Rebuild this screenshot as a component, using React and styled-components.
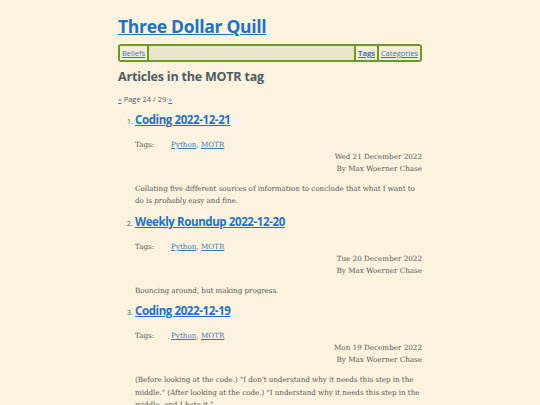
import React from "react";
import styled, { createGlobalStyle } from "styled-components";

const GlobalStyle = createGlobalStyle`
    html, body {
        margin: 0;
        padding: 0;
        background: #fbf3dd;
    }
    body {
        font-family: "DejaVu Serif", serif;
        color: #555a5c;
    }
`;

const Page = styled.div`
    width: 304px;
    margin: 0 auto;
    padding-top: 14px;
`;

const SiteTitle = styled.h1`
    margin: 0;
    font-family: "Open Sans", sans-serif;
    font-size: 17.5px;
    font-weight: 700;
    line-height: 24px;
    letter-spacing: -0.3px;
    a {
        color: #1c72c9;
    }
`;

const Nav = styled.nav`
    display: flex;
    align-items: stretch;
    margin-top: 6px;
    height: 14px;
    border: 2px solid #6b9b22;
    border-radius: 3px;
    background: #ebe4cd;
    font-family: "Open Sans", sans-serif;
    font-size: 7.5px;
    line-height: 14px;
`;

const NavItem = styled.a`
    padding: 0 2px;
    color: #3b77b8;
    font-weight: ${(p) => (p.$bold ? 700 : 400)};
    border-left: ${(p) => (p.$sepLeft ? "2px solid #6b9b22" : "none")};
    border-right: ${(p) => (p.$sepRight ? "2px solid #6b9b22" : "none")};
    background: #f4ecd4;
`;

const NavFill = styled.div`
    flex: 1;
`;

const TagHeading = styled.h2`
    margin: 6px 0 0;
    font-family: "Open Sans", sans-serif;
    font-size: 12.5px;
    font-weight: 700;
    line-height: 18px;
    color: #4e5c66;
    letter-spacing: -0.2px;
`;

const Pager = styled.div`
    margin-top: 7px;
    font-family: "Open Sans", sans-serif;
    font-size: 7.5px;
    line-height: 12px;
    color: #56606a;
    a {
        color: #3b77b8;
    }
`;

const List = styled.ol`
    margin: 3px 0 0;
    padding-left: 17px;
    li::marker {
        font-family: "Open Sans", sans-serif;
        font-size: 7.5px;
        color: #56606a;
    }
`;

const Entry = styled.li`
    margin-bottom: 2px;
`;

const EntryTitle = styled.h3`
    margin: 0;
    font-family: "Open Sans", sans-serif;
    font-size: 11.5px;
    font-weight: 700;
    line-height: 24px;
    letter-spacing: -0.4px;
    a {
        color: #1c72c9;
    }
`;

const Meta = styled.div`
    font-size: 7.2px;
    line-height: 12px;
`;

const TagRow = styled.div`
    display: flex;
    margin-top: 7px;
    a {
        color: #3b77b8;
    }
`;

const TagLabel = styled.span`
    width: 36px;
`;

const Byline = styled.div`
    text-align: right;
`;

const Summary = styled.p`
    margin: 8px 0 0;
    font-size: 7.2px;
    line-height: 12.4px;
    letter-spacing: -0.05px;
`;

const entries = [
    {
        title: "Coding 2022-12-21",
        date: "Wed 21 December 2022",
        summary: (
            <>
                Collating five different sources of information to conclude that what I want to do is{" "}
                <em>probably</em> easy and fine.
            </>
        ),
    },
    {
        title: "Weekly Roundup 2022-12-20",
        date: "Tue 20 December 2022",
        summary: <>Bouncing around, but making progress.</>,
    },
    {
        title: "Coding 2022-12-19",
        date: "Mon 19 December 2022",
        summary: (
            <>
                (Before looking at the code.) "I don't understand why it needs this step in the middle." (After
                looking at the code.) "I understand why it needs this step in the middle, and I <em>hate</em> it."
            </>
        ),
    },
];

export default function App() {
    return (
        <Page>
            <GlobalStyle />
            <SiteTitle>
                <a href="#">Three Dollar Quill</a>
            </SiteTitle>
            <Nav>
                <NavItem href="#" $sepRight>Beliefs</NavItem>
                <NavFill />
                <NavItem href="#" $bold $sepLeft $sepRight>Tags</NavItem>
                <NavItem href="#">Categories</NavItem>
            </Nav>
            <TagHeading>Articles in the MOTR tag</TagHeading>
            <Pager>
                <a href="#">«</a> Page 24 / 29 <a href="#">»</a>
            </Pager>
            <List>
                {entries.map((e) => (
                    <Entry key={e.title}>
                        <EntryTitle>
                            <a href="#">{e.title}</a>
                        </EntryTitle>
                        <Meta>
                            <TagRow>
                                <TagLabel>Tags:</TagLabel>
                                <span>
                                    <a href="#">Python</a>, <a href="#">MOTR</a>
                                </span>
                            </TagRow>
                            <Byline>{e.date}</Byline>
                            <Byline>By Max Woerner Chase</Byline>
                        </Meta>
                        <Summary>{e.summary}</Summary>
                    </Entry>
                ))}
            </List>
        </Page>
    );
}
